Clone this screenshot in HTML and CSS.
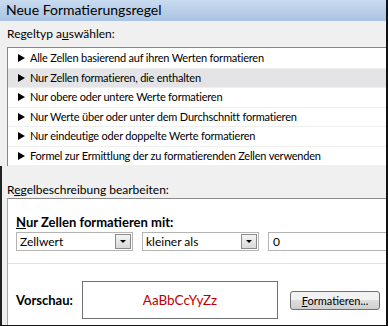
FILE: index.html
```html
<!DOCTYPE html>
<html lang="de">
<head>
  <meta charset="UTF-8">
  <title>Neue Formatierungsregel</title>
  <link rel="stylesheet" href="styles.css">
</head>
<body>
  <div class="dialog">
    <!-- Titelleiste -->
    <div class="titlebar">Neue Formatierungsregel</div>

    <div class="content">
      <div class="label">Regeltyp a<u>u</u>swählen:</div>
      <ul class="rule-list">
        <li>Alle Zellen basierend auf ihren Werten formatieren</li>
        <li class="selected">Nur Zellen formatieren, die enthalten</li>
        <li>Nur obere oder untere Werte formatieren</li>
        <li>Nur Werte über oder unter dem Durchschnitt formatieren</li>
        <li>Nur eindeutige oder doppelte Werte formatieren</li>
        <li>Formel zur Ermittlung der zu formatierenden Zellen verwenden</li>
      </ul>
    </div>

    <div class="lower">
      <div class="label">R<u>e</u>gelbeschreibung bearbeiten:</div>
      <div class="desc">
        <div class="desc-top">
          <div class="desc-title"><u>N</u>ur Zellen formatieren mit:</div>
          <div class="controls">
            <div class="combo"><span>Zellwert</span><i class="arrow"></i></div>
            <div class="combo"><span>kleiner als</span><i class="arrow"></i></div>
            <div class="textbox">0</div>
          </div>
        </div>
        <div class="preview-row">
          <div class="preview-label">Vorschau:</div>
          <div class="preview-box">AaBbCcYyZz</div>
          <button class="btn"><u>F</u>ormatieren...</button>
        </div>
      </div>
    </div>
  </div>
</body>
</html>
```

FILE: styles.css
```css
/* Grundlayout */
body {
  margin: 0;
  font-family: Lato, "Open Sans", sans-serif;
  font-size: 12px;
  color: #000;
  background: #fff;
}
u { text-decoration: underline; }

.dialog {
  width: 386px;
  height: 325px;
  background: #f0f0f0;
  border-right: 2px solid #111;
  border-bottom: 1px solid #111;
  overflow: hidden;
}

/* === Titelleiste === */
.titlebar {
  height: 21px;
  line-height: 20px;
  padding-left: 6px;
  font-size: 14px;
  background: linear-gradient(#c9dbef, #a9c3e2);
}

/* === Regeltyp === */
.content {
  padding-left: 7px;
}
.label {
  height: 26px;
  line-height: 25px;
  font-size: 12px;
}

.rule-list {
  list-style: none;
  margin: 0;
  padding: 1px 0 0;
  background: #fff;
  border: 1px solid #828790;
  border-right: none;
  height: 119px;
  box-sizing: border-box;
  font-size: 11px;
  letter-spacing: -0.2px;
}
.rule-list li {
  height: 18.5px;
  line-height: 18px;
  padding-left: 22px;
  border-bottom: 1px solid #efefef;
  position: relative;
}
.rule-list li::before {
  content: "";
  position: absolute;
  left: 10px;
  top: 5px;
  border-left: 7px solid #000;
  border-top: 4px solid transparent;
  border-bottom: 4px solid transparent;
}
.rule-list li.selected {
  background: #e4e4e6;
}

/* === Regelbeschreibung === */
.lower {
  border-left: 2px solid #222;
  padding: 17px 0 0 5px;
}
.lower .label {
  height: 15px;
  line-height: 14px;
}
.desc {
  background: #fff;
  border-top: 1px solid #8c8c8c;
  border-left: 1px solid #a8a8a8;
  height: 130px;
}
.desc-top {
  padding: 15px 0 0 8px;
  height: 49px;
  border-bottom: 1px solid #e2e2e2;
}
.desc-title {
  font-weight: bold;
  font-size: 13px;
  height: 16px;
  line-height: 16px;
}
.controls {
  display: flex;
  gap: 9px;
  margin-top: 2px;
}
.combo,
.textbox {
  height: 19px;
  border: 1px solid #b4b4b4;
  box-sizing: border-box;
  padding-left: 3px;
  background: #fff;
  display: flex;
  justify-content: space-between;
  align-items: center;
}
.combo { width: 117px; padding-right: 1px; }
.textbox { flex: 1; padding-left: 4px; border-right: none; }
.arrow {
  width: 16px;
  height: 15px;
  border: 1px solid #8a8a8a;
  box-sizing: border-box;
  background: linear-gradient(#f4f4f4, #d9d9d9);
  position: relative;
}
.arrow::after {
  content: "";
  position: absolute;
  left: 4px;
  top: 5px;
  border-top: 3px solid #000;
  border-left: 3px solid transparent;
  border-right: 3px solid transparent;
}

/* === Vorschau === */
.preview-row {
  display: flex;
  align-items: center;
  padding: 17px 0 0 8px;
}
.preview-label {
  font-weight: bold;
  font-size: 13px;
  width: 66px;
}
.preview-box {
  width: 196px;
  height: 38px;
  box-sizing: border-box;
  border: 1px solid #707070;
  color: #c00000;
  font-size: 13.5px;
  display: flex;
  align-items: center;
  justify-content: center;
}
.btn {
  margin-left: 12px;
  width: 90px;
  height: 19px;
  padding: 0;
  font-family: inherit;
  font-size: 11px;
  border: 1px solid #707070;
  border-radius: 3px;
  background: linear-gradient(#f2f2f2 50%, #dddddd 50%, #cfcfcf);
}
```
